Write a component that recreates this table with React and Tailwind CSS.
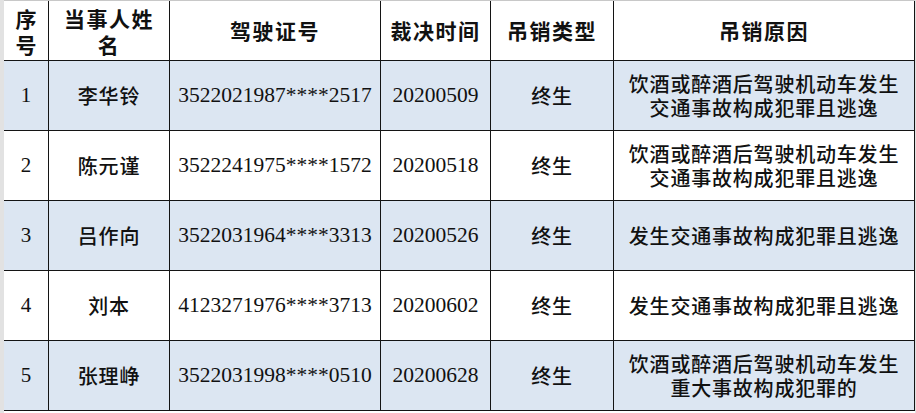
import React from 'react';

const rows = [
  { no: '1', name: '李华铃', id: '3522021987****2517', date: '20200509', type: '终生', reason: ['饮酒或醉酒后驾驶机动车发生', '交通事故构成犯罪且逃逸'] },
  { no: '2', name: '陈元谨', id: '3522241975****1572', date: '20200518', type: '终生', reason: ['饮酒或醉酒后驾驶机动车发生', '交通事故构成犯罪且逃逸'] },
  { no: '3', name: '吕作向', id: '3522031964****3313', date: '20200526', type: '终生', reason: ['发生交通事故构成犯罪且逃逸'] },
  { no: '4', name: '刘本', id: '4123271976****3713', date: '20200602', type: '终生', reason: ['发生交通事故构成犯罪且逃逸'] },
  { no: '5', name: '张理峥', id: '3522031998****0510', date: '20200628', type: '终生', reason: ['饮酒或醉酒后驾驶机动车发生', '重大事故构成犯罪的'] },
];

const cjk = "font-['Noto_Sans_CJK_SC','Noto_Sans',sans-serif]";
const serif = "font-['Liberation_Serif','Noto_Sans_CJK_SC',serif]";
const cell = 'flex items-center justify-center border-r border-b border-[#141414] text-center text-[#111]';

export default function App() {
  return (
    <div className="flex h-[413px] w-[916px] overflow-hidden bg-white">
      <div className="w-[4px] shrink-0 bg-[#e2e2e2]"></div>

      <div className="flex flex-col">
        <div className="grid grid-cols-[45px_121px_211px_110px_123px_301px] grid-rows-[60px_70px_70px_70px_70px_70px] border-t border-[#c8c8c8]">
          {/* header */}
          <div className={`${cell} ${cjk} text-[21px] font-bold leading-[26px]`}>序<br />号</div>
          <div className={`${cell} ${cjk} text-[21px] font-bold leading-[26px] tracking-[1.5px]`}>当事人姓<br />名</div>
          <div className={`${cell} ${cjk} text-[21px] font-bold tracking-[1.5px]`}>驾驶证号</div>
          <div className={`${cell} ${cjk} text-[21px] font-bold tracking-[1.5px]`}>裁决时间</div>
          <div className={`${cell} ${cjk} text-[21px] font-bold tracking-[1.5px]`}>吊销类型</div>
          <div className={`${cell} ${cjk} text-[21px] font-bold tracking-[1.5px]`}>吊销原因</div>

          {rows.map((r, i) => {
            const bg = i % 2 === 0 ? 'bg-[#dce6f2]' : 'bg-white';
            return (
              <React.Fragment key={r.no}>
                <div className={`${cell} ${bg} ${serif} text-[21px]`}>{r.no}</div>
                <div className={`${cell} ${bg} ${cjk} text-[20px] font-medium tracking-[0.8px]`}>{r.name}</div>
                <div className={`${cell} ${bg} ${serif} text-[21.5px]`}>{r.id}</div>
                <div className={`${cell} ${bg} ${serif} text-[21.5px]`}>{r.date}</div>
                <div className={`${cell} ${bg} ${cjk} text-[20px] font-medium tracking-[0.8px]`}>{r.type}</div>
                <div className={`${cell} ${bg} ${cjk} flex-col text-[20px] font-medium leading-[24px] tracking-[0.8px]`}>
                  {r.reason.map((line) => (
                    <span key={line}>{line}</span>
                  ))}
                </div>
              </React.Fragment>
            );
          })}
        </div>
      </div>

      <div className="flex-1 bg-[#e2e2e2]"></div>
    </div>
  );
}
